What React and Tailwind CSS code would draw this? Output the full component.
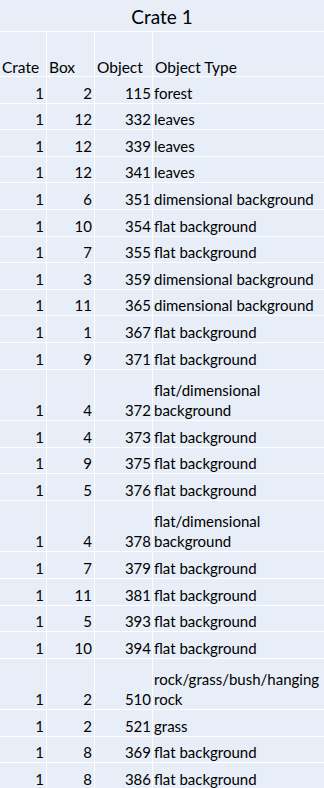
const ROWS = [
  [1, 2, 115, 'forest'],
  [1, 12, 332, 'leaves'],
  [1, 12, 339, 'leaves'],
  [1, 12, 341, 'leaves'],
  [1, 6, 351, 'dimensional background'],
  [1, 10, 354, 'flat background'],
  [1, 7, 355, 'flat background'],
  [1, 3, 359, 'dimensional background'],
  [1, 11, 365, 'dimensional background'],
  [1, 1, 367, 'flat background'],
  [1, 9, 371, 'flat background'],
  [1, 4, 372, ['flat/dimensional', 'background']],
  [1, 4, 373, 'flat background'],
  [1, 9, 375, 'flat background'],
  [1, 5, 376, 'flat background'],
  [1, 4, 378, ['flat/dimensional', 'background']],
  [1, 7, 379, 'flat background'],
  [1, 11, 381, 'flat background'],
  [1, 5, 393, 'flat background'],
  [1, 10, 394, 'flat background'],
  [1, 2, 510, ['rock/grass/bush/hanging', 'rock']],
  [1, 2, 521, 'grass'],
  [1, 8, 369, 'flat background'],
  [1, 8, 386, 'flat background'],
];

function DataRow({ crate, box, object, type }) {
  const tall = Array.isArray(type);
  const lines = tall ? type : [type];
  return (
    <div className={`flex border-b border-white leading-[20px] ${tall ? 'h-[51.5px]' : 'h-[26.6px]'}`}>
      <div className="w-[47px] shrink-0 border-r border-white flex items-end justify-end pr-[2px]">{crate}</div>
      <div className="w-[48px] shrink-0 border-r border-white flex items-end justify-end pr-[2px]">{box}</div>
      <div className="w-[58px] shrink-0 border-r border-white flex items-end justify-end pr-[1px]">{object}</div>
      <div className="flex-1 flex flex-col justify-end pl-[1px]">
        {lines.map((l) => (
          <span key={l} className="whitespace-nowrap">{l}</span>
        ))}
      </div>
    </div>
  );
}

export default function App() {
  return (
    <div className="min-h-screen h-[788px] overflow-hidden bg-[#e8eef7] text-black text-[15px] font-['Lato','Liberation_Sans',sans-serif]">
      <div className="h-[32px] border-b border-white flex items-center justify-center text-[19px] pt-[3px]">
        Crate 1
      </div>
      <div className="flex h-[45px] border-b border-white leading-[17px] text-[15.5px]">
        <div className="w-[47px] shrink-0 border-r border-white flex items-end pl-[2px]">Crate</div>
        <div className="w-[48px] shrink-0 border-r border-white flex items-end pl-[2px]">Box</div>
        <div className="w-[58px] shrink-0 border-r border-white flex items-end pl-[2px]">Object</div>
        <div className="flex-1 flex items-end pl-[2px]">Object Type</div>
      </div>
      {ROWS.map(([crate, box, object, type]) => (
        <DataRow key={object} crate={crate} box={box} object={object} type={type} />
      ))}
    </div>
  );
}
